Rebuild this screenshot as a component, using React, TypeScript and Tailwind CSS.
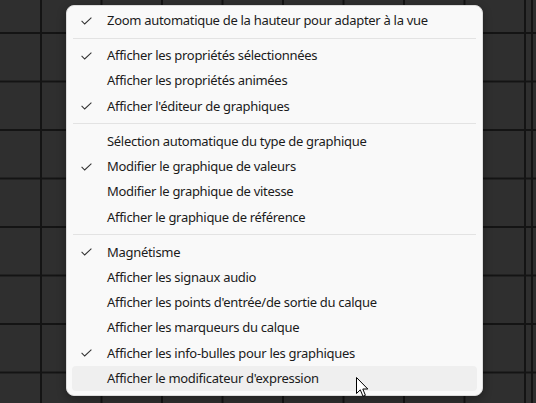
import React from "react";

type Item = { label: string; checked?: boolean; hover?: boolean } | "sep";

const items: Item[] = [
  { label: "Zoom automatique de la hauteur pour adapter à la vue", checked: true },
  "sep",
  { label: "Afficher les propriétés sélectionnées", checked: true },
  { label: "Afficher les propriétés animées" },
  { label: "Afficher l'éditeur de graphiques", checked: true },
  "sep",
  { label: "Sélection automatique du type de graphique" },
  { label: "Modifier le graphique de valeurs", checked: true },
  { label: "Modifier le graphique de vitesse" },
  { label: "Afficher le graphique de référence" },
  "sep",
  { label: "Magnétisme", checked: true },
  { label: "Afficher les signaux audio" },
  { label: "Afficher les points d'entrée/de sortie du calque" },
  { label: "Afficher les marqueurs du calque" },
  { label: "Afficher les info-bulles pour les graphiques", checked: true },
  { label: "Afficher le modificateur d'expression", hover: true },
];

function Check() {
  return (
    <svg width="11" height="8" viewBox="0 0 11 8" fill="none">
      <path d="M0.6 3.9 L3.7 7 L10.4 0.6" stroke="#333" strokeWidth="1.05" />
    </svg>
  );
}

function Cursor() {
  return (
    <svg width="13" height="21" viewBox="0 0 13 21" className="absolute left-[356px] top-[377px]">
      <path
        d="M0.5 0.5 L0.5 16.5 L4.3 12.8 L7 19.3 L9.4 18.3 L6.8 12 L11.8 12 Z"
        fill="#fff"
        stroke="#000"
        strokeWidth="1"
        strokeLinejoin="round"
      />
    </svg>
  );
}

export default function App() {
  return (
    <div className="relative w-[536px] h-[403px] overflow-hidden bg-[#2f2f2f] [background-image:linear-gradient(to_right,#141414_0_2px,transparent_2px),linear-gradient(to_bottom,#141414_0_2px,transparent_2px)] [background-size:60.5px_48.5px] [background-position:40px_32px] font-['Noto_Sans',sans-serif]">
      {/* extra timeline edge line */}
      <div className="absolute left-[531px] top-0 h-full w-[2px] bg-[#141414]" />

      {/* context menu */}
      <div className="absolute left-[66px] top-[5px] w-[417px] pt-[2px] pb-[4px] rounded-[8px] bg-[#f9f9f9] border border-[#dcdcdc] shadow-[0_3px_10px_rgba(0,0,0,0.3)]">
        {items.map((it, i) =>
          it === "sep" ? (
            <div key={i} className="h-[9.7px] flex items-center mx-[6px]">
              <div className="h-px w-full bg-[#e3e3e3]" />
            </div>
          ) : (
            <div
              key={i}
              className={`h-[25.3px] mx-[5px] flex items-center rounded-[4px] text-[13px] tracking-[-0.3px] text-[#1b1b1b] ${
                it.hover ? "bg-[#efefef]" : ""
              }`}
            >
              <span className="w-[35px] pl-[9px] flex items-center">{it.checked && <Check />}</span>
              <span className="leading-none">{it.label}</span>
            </div>
          )
        )}
      </div>

      <Cursor />
    </div>
  );
}
